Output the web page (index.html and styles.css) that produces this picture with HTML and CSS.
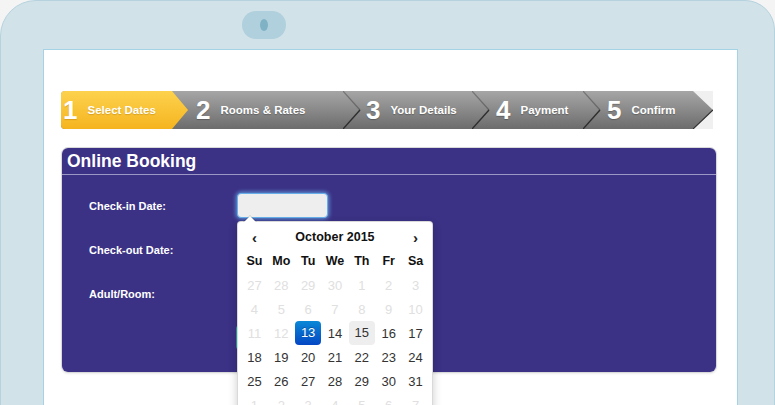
FILE: index.html
```html
<!DOCTYPE html>
<html>
<head>
<meta charset="utf-8">
<link rel="stylesheet" href="styles.css">
</head>
<body>
<div class="device">
  <div class="camera"><span class="lens"></span></div>
  <div class="screen">
    <div class="steps">
      <div class="step step-active"><span class="num">1</span><span class="lbl">Select Dates</span></div>
      <div class="step s2"><span class="num">2</span><span class="lbl">Rooms &amp; Rates</span></div>
      <svg class="sep" width="18" height="38" viewBox="0 0 18 38"><path d="M0 0 L17 19" stroke="rgba(0,0,0,0.28)" stroke-width="1.2" fill="none"/><path d="M17 19 L0 38" stroke="#2e2e2e" stroke-width="1.4" fill="none"/></svg>
      <div class="step s3"><span class="num">3</span><span class="lbl">Your Details</span></div>
      <svg class="sep" width="18" height="38" viewBox="0 0 18 38"><path d="M0 0 L17 19" stroke="rgba(0,0,0,0.28)" stroke-width="1.2" fill="none"/><path d="M17 19 L0 38" stroke="#2e2e2e" stroke-width="1.4" fill="none"/></svg>
      <div class="step s4"><span class="num">4</span><span class="lbl">Payment</span></div>
      <svg class="sep" width="18" height="38" viewBox="0 0 18 38"><path d="M0 0 L17 19" stroke="rgba(0,0,0,0.28)" stroke-width="1.2" fill="none"/><path d="M17 19 L0 38" stroke="#2e2e2e" stroke-width="1.4" fill="none"/></svg>
      <div class="step s5"><span class="num">5</span><span class="lbl">Confirm</span></div>
      <svg class="end" width="20" height="38" viewBox="0 0 20 38">
        <defs><linearGradient id="g" x1="0" y1="0" x2="0" y2="1"><stop offset="0" stop-color="#a6a6a6"/><stop offset="1" stop-color="#6c6c6c"/></linearGradient></defs>
        <rect width="20" height="38" fill="#f0f0f0"/>
        <polygon points="0,0 20,19 0,38" fill="url(#g)"/>
        <path d="M20 19 L0 38" stroke="#2e2e2e" stroke-width="1.2" fill="none"/>
      </svg>
    </div>

    <div class="panel">
      <div class="panel-inner">
        <div class="panel-head">Online Booking</div>
        <div class="panel-body">
          <div class="row">
            <label class="flabel">Check-in Date:</label>
            <div class="field">
              <div class="input focus"></div>
              <div class="datepicker">
                <table class="cal">
                  <thead>
                    <tr class="mrow"><th class="nav">&lsaquo;</th><th colspan="5" class="month">October 2015</th><th class="nav">&rsaquo;</th></tr>
                    <tr class="dow"><th>Su</th><th>Mo</th><th>Tu</th><th>We</th><th>Th</th><th>Fr</th><th>Sa</th></tr>
                  </thead>
                  <tbody>
                    <tr><td class="off">27</td><td class="off">28</td><td class="off">29</td><td class="off">30</td><td class="off">1</td><td class="off">2</td><td class="off">3</td></tr>
                    <tr><td class="off">4</td><td class="off">5</td><td class="off">6</td><td class="off">7</td><td class="off">8</td><td class="off">9</td><td class="off">10</td></tr>
                    <tr><td class="off">11</td><td class="off">12</td><td><span class="active">13</span></td><td>14</td><td><span class="today">15</span></td><td>16</td><td>17</td></tr>
                    <tr><td>18</td><td>19</td><td>20</td><td>21</td><td>22</td><td>23</td><td>24</td></tr>
                    <tr><td>25</td><td>26</td><td>27</td><td>28</td><td>29</td><td>30</td><td>31</td></tr>
                    <tr><td class="off">1</td><td class="off">2</td><td class="off">3</td><td class="off">4</td><td class="off">5</td><td class="off">6</td><td class="off">7</td></tr>
                  </tbody>
                </table>
              </div>
            </div>
          </div>
          <div class="row">
            <label class="flabel">Check-out Date:</label>
            <div class="field"><div class="input"></div></div>
          </div>
          <div class="row">
            <label class="flabel">Adult/Room:</label>
            <div class="field"><div class="input"></div></div>
          </div>
          <div class="row">
            <span class="flabel btn-spacer"></span>
            <button class="btn" aria-label="Search"></button>
          </div>
        </div>
      </div>
    </div>
  </div>
</div>
</body>
</html>
```

FILE: styles.css
```css
html, body {
  margin: 0;
  padding: 0;
  width: 775px;
  height: 405px;
  overflow: hidden;
  background: #f4f4f4;
  font-family: "Liberation Sans", Arial, sans-serif;
}

.device {
  width: 773px;
  height: 440px;
  background: #d2e2e9;
  border: 1px solid #b5d2de;
  border-radius: 36px 30px 0 0;
}

.camera {
  margin: 10px 0 0 241px;
  width: 44px;
  height: 28px;
  border-radius: 14px;
  background: #afd0dc;
  display: flex;
  align-items: center;
  justify-content: center;
}

.lens {
  width: 8px;
  height: 12px;
  border-radius: 50%;
  background: #80b2c6;
}

.screen {
  margin: 10px 0 0 42px;
  width: 695px;
  height: 420px;
  box-sizing: border-box;
  background: #ffffff;
  border: 1px solid #a5d2e5;
  border-bottom: none;
  padding: 41px 0 0 17px;
}

/* Steps */
.steps {
  display: flex;
  width: 652px;
  height: 38px;
  background: linear-gradient(to bottom, #a6a6a6, #6c6c6c);
  border-radius: 4px 0 0 4px;
}

.step {
  display: flex;
  align-items: center;
  height: 38px;
  color: #fff;
  box-sizing: border-box;
  flex: none;
  text-shadow: 0 1px 1px rgba(0,0,0,0.25);
}

.num {
  font-size: 26px;
  font-weight: bold;
  line-height: 1;
  margin-right: 10px;
}

.lbl {
  font-size: 11.5px;
  font-weight: bold;
}

.step-active {
  width: 127px;
  padding-left: 2px;
  background: linear-gradient(to bottom, #fdd24e, #f5b41f);
  border-radius: 4px 0 0 4px;
  clip-path: polygon(0 0, 111px 0, 127px 50%, 111px 100%, 0 100%);
  text-shadow: 0 1px 1px rgba(140,90,0,0.3);
}

.s2 { width: 155px; padding-left: 8px; }
.s3 { width: 111px; padding-left: 5px; }
.s4 { width: 93px; padding-left: 6px; }
.s5 { width: 92px; padding-left: 6px; }

.sep, .end { flex: none; display: block; }

/* Panel */
.panel {
  margin-top: 18px;
  width: 656px;
  box-sizing: border-box;
  border: 1px solid #d9d9d9;
  border-radius: 7px;
  box-shadow: 0 1px 2px rgba(0,0,0,0.08);
}

.panel-inner {
  background: #3b3185;
  border-radius: 6px;
}

.panel-head {
  height: 26px;
  line-height: 26px;
  padding-left: 5px;
  font-size: 17.5px;
  font-weight: bold;
  color: #fff;
  border-bottom: 1px solid #9c97c4;
}

.panel-body {
  padding: 18px 0 22px 27px;
  display: flex;
  flex-direction: column;
  gap: 19px;
}

.row {
  display: flex;
  align-items: center;
  height: 25px;
}

.flabel {
  width: 148px;
  flex: none;
  color: #fff;
  font-size: 11px;
  font-weight: bold;
}

.btn-spacer { width: 147px; }

.field {
  position: relative;
}

.input {
  width: 91px;
  height: 25px;
  box-sizing: border-box;
  background: #eeeeee;
  border: 1px solid #cfd6e0;
  border-radius: 4px;
}

.input.focus {
  border-color: #66afe9;
  box-shadow: 0 0 4px 1px rgba(102,175,233,0.85);
}

.btn {
  width: 80px;
  height: 25px;
  border: none;
  border-radius: 4px;
  background: #22a69d;
}

/* Datepicker */
.datepicker {
  position: absolute;
  top: 28px;
  left: 0;
  z-index: 10;
  width: 196px;
  box-sizing: border-box;
  background: #fff;
  border: 1px solid rgba(0,0,0,0.15);
  border-radius: 4px;
  padding: 3px;
  box-shadow: 0 4px 10px rgba(0,0,0,0.2);
}

.datepicker::before {
  content: "";
  position: absolute;
  top: -7px;
  left: 5px;
  border-left: 7px solid transparent;
  border-right: 7px solid transparent;
  border-bottom: 7px solid rgba(0,0,0,0.15);
}

.datepicker::after {
  content: "";
  position: absolute;
  top: -6px;
  left: 6px;
  border-left: 6px solid transparent;
  border-right: 6px solid transparent;
  border-bottom: 6px solid #fff;
}

.cal {
  width: 188px;
  border-collapse: collapse;
  table-layout: fixed;
}

.cal th, .cal td {
  height: 24px;
  padding: 0;
  text-align: center;
  vertical-align: middle;
}

.cal th {
  font-weight: bold;
  font-size: 12.5px;
  color: #111;
}

.cal .nav {
  font-size: 15px;
  color: #222;
}

.cal td {
  font-size: 13px;
  color: #333;
}

.cal td.off {
  color: #e0e0e0;
}

.cal td span {
  display: block;
  height: 24px;
  line-height: 24px;
  border-radius: 4px;
  margin: 0 0.5px;
}

.cal .active {
  background: linear-gradient(to bottom, #0a88d6, #0447c4);
  color: #fff;
  text-shadow: 0 -1px 0 rgba(0,0,0,0.25);
}

.cal .today {
  background: #eeeeee;
}
```
